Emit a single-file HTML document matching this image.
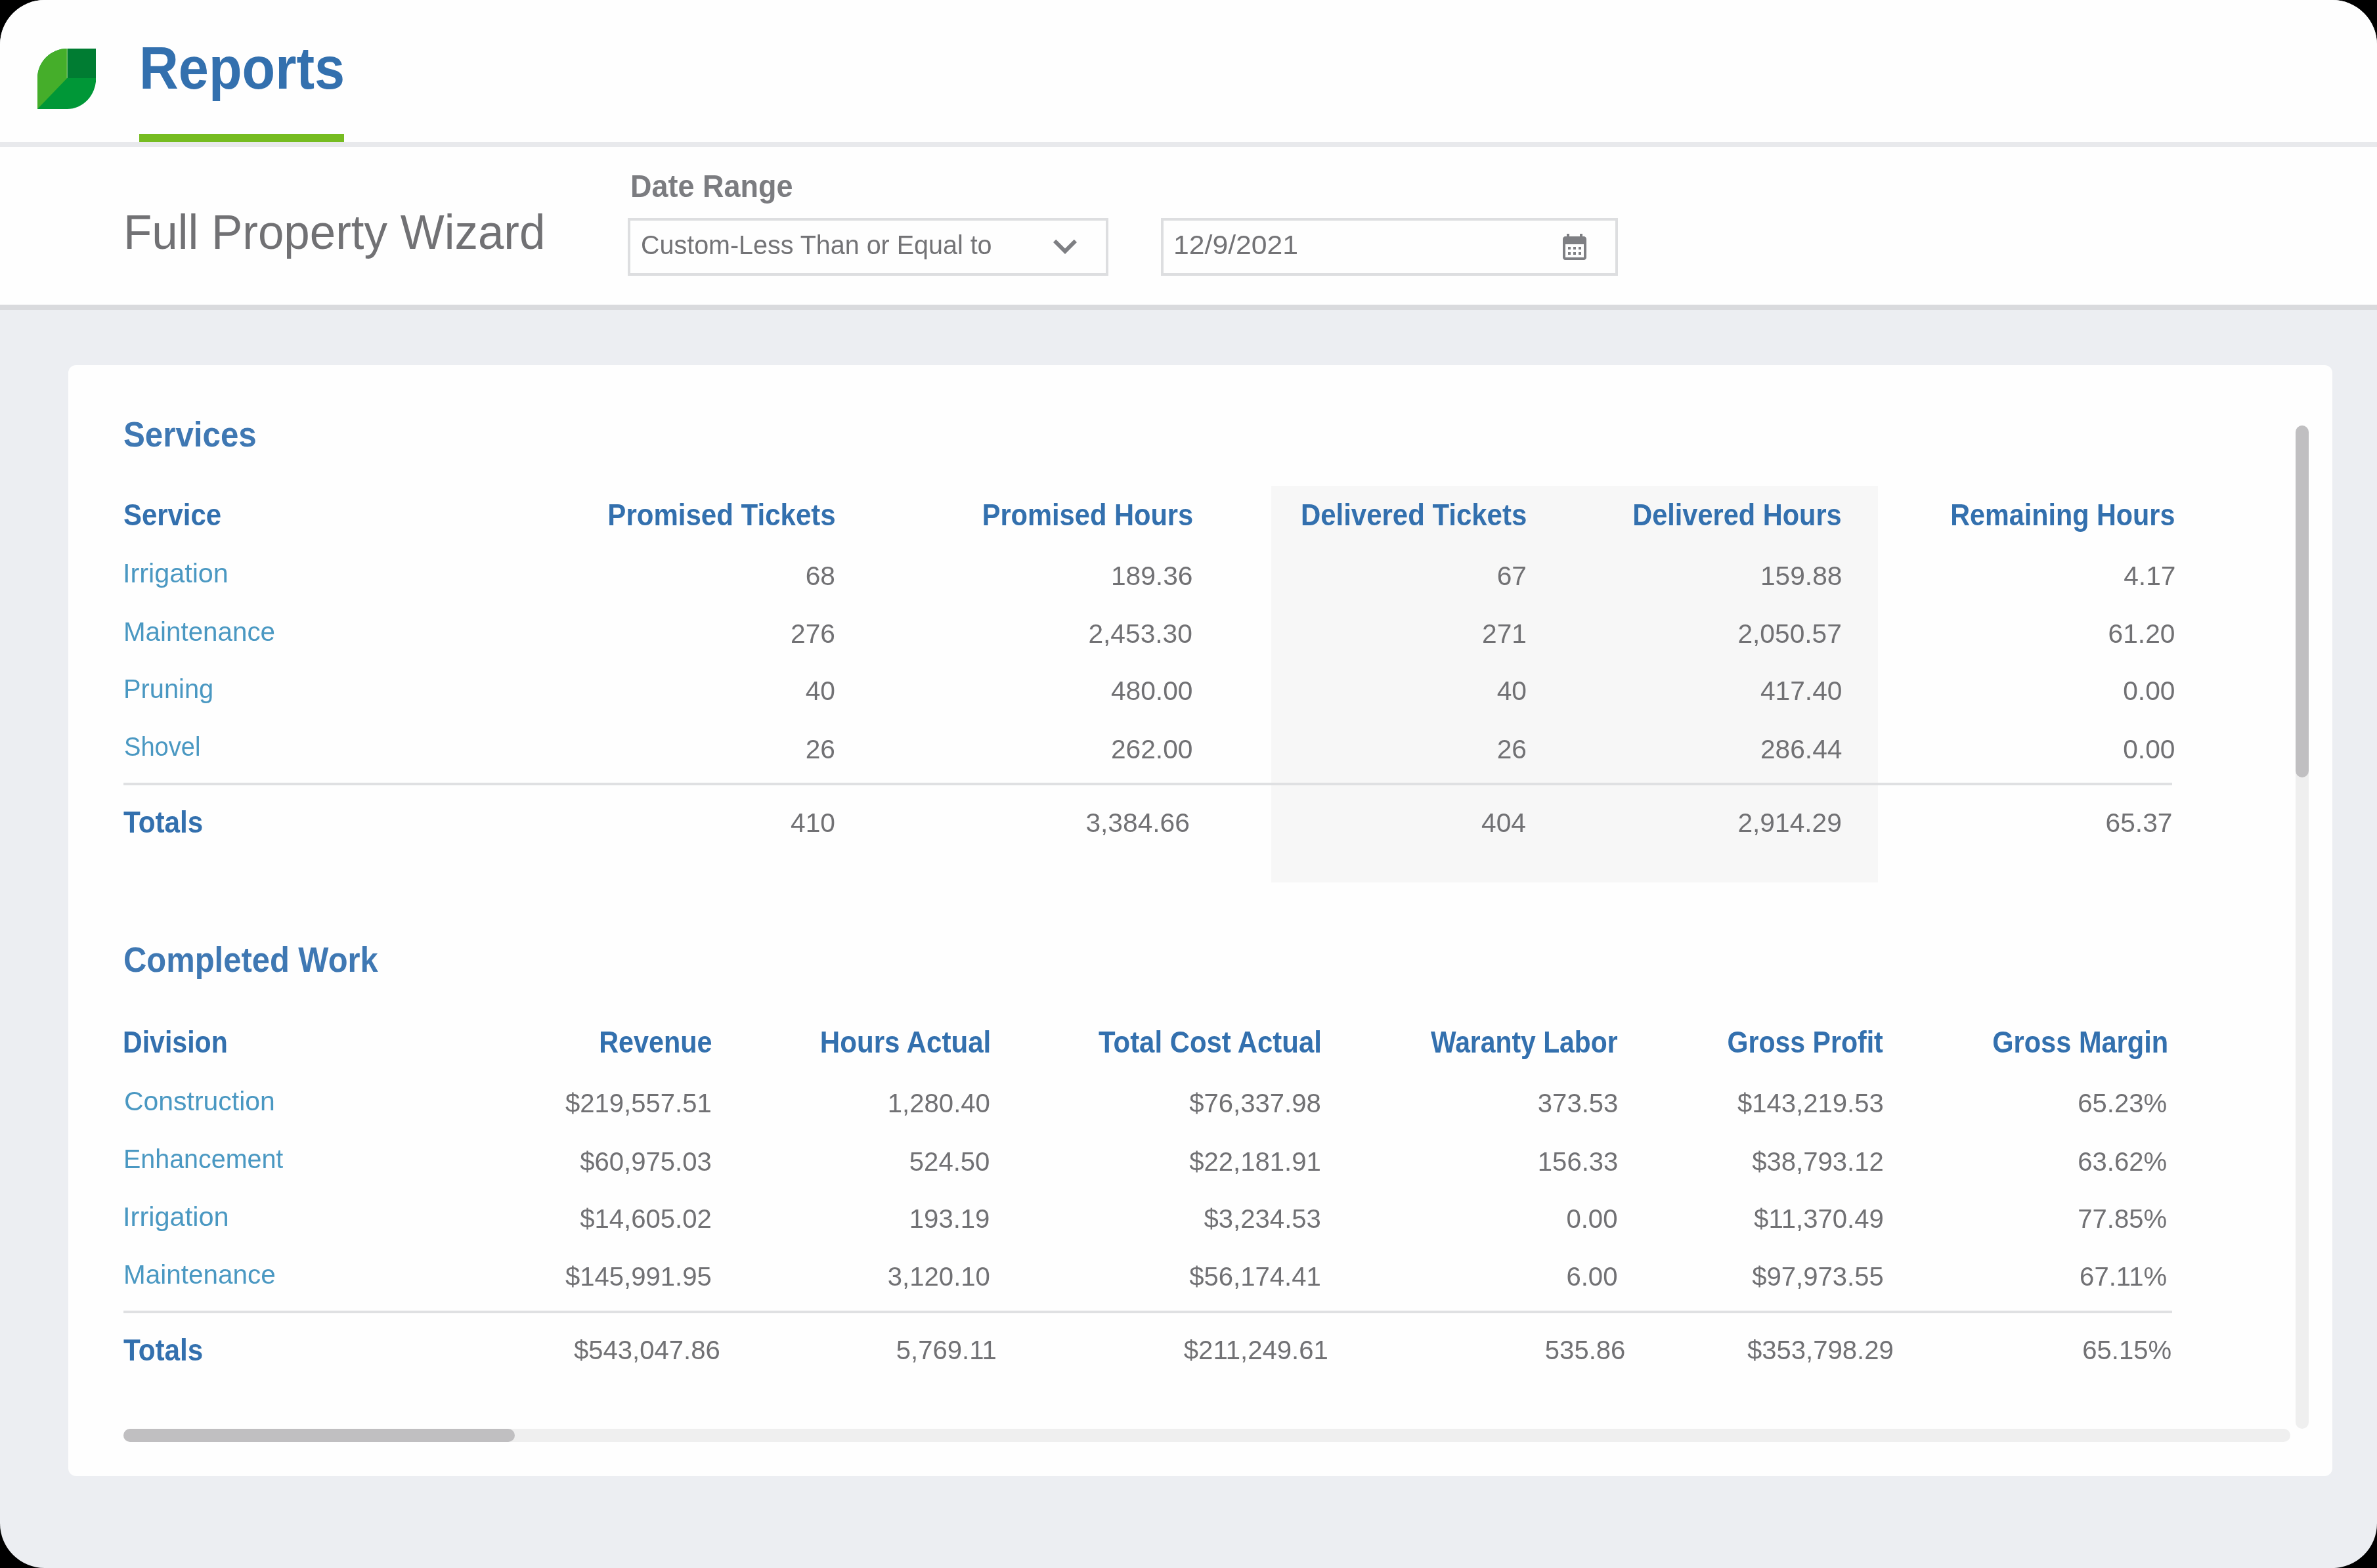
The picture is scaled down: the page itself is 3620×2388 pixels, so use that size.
<!DOCTYPE html>
<html><head><meta charset="utf-8"><title>Reports</title>
<style>
html,body{margin:0;padding:0;background:#000;}
body{width:3620px;height:2388px;overflow:hidden;position:relative;font-family:"Liberation Sans",sans-serif;}
.frame{position:absolute;left:0;top:0;width:3620px;height:2388px;border-radius:68px;overflow:hidden;background:#eceef2;}
.abs{position:absolute;}
.t{position:absolute;white-space:nowrap;line-height:1;font-family:"Liberation Sans",sans-serif;}
.tl{position:absolute;left:0;top:0;width:3620px;height:2388px;will-change:transform;}
</style></head>
<body>
<div class="frame">
  <!-- header -->
  <div class="abs" style="left:0;top:0;width:3620px;height:216px;background:#fefefe;"></div>
  <div class="abs" style="left:0;top:216px;width:3620px;height:8px;background:#e8e9ec;"></div>
  <div class="abs" style="left:0;top:224px;width:3620px;height:240px;background:#fefefe;"></div>
  <div class="abs" style="left:0;top:464px;width:3620px;height:8px;background:#d9dadd;"></div>
  <!-- logo -->
  <svg class="abs" style="left:57.2px;top:73.8px;" width="89.3" height="92" viewBox="0 0 89.3 92">
    <path d="M0 92 L0 44.9 A45.2 44.9 0 0 1 45.2 0 H89.3 V44.9 A44.1 47.1 0 0 1 45.2 92 Z" fill="#009737"/>
    <path d="M0 92 L0 44.9 A45.2 44.9 0 0 1 45.2 0 L45.2 44.9 Z" fill="#45ae2a"/>
    <path d="M45.2 0 H89.3 V44.9 H45.2 Z" fill="#007c32"/>
    <rect x="44.7" y="0" width="1" height="44.9" fill="#9fd58f"/>
  </svg>
  <div class="abs" style="left:212px;top:204px;width:312px;height:12px;background:#76bc21;"></div>
  <!-- select -->
  <div class="abs" style="left:956px;top:332px;width:724px;height:80px;border:4px solid #dddee0;background:#fefefe;"></div>
  <svg class="abs" style="left:1586px;top:339.4px;" width="72" height="72" viewBox="0 0 24 24"><path d="M16.59 8.59L12 13.17 7.41 8.59 6 10l6 6 6-6z" fill="#7e7f83"/></svg>
  <!-- date -->
  <div class="abs" style="left:1768px;top:332px;width:688px;height:80px;border:4px solid #dddee0;background:#fefefe;"></div>
  <svg class="abs" style="left:2374px;top:352px;" width="48" height="48" viewBox="0 0 24 24"><path d="M19 4h-1V2h-2v2H8V2H6v2H5c-1.11 0-1.99.9-1.99 2L3 20c0 1.1.89 2 2 2h14c1.1 0 2-.9 2-2V6c0-1.1-.9-2-2-2zm0 16H5V10h14v10zM9 14H7v-2h2v2zm4 0h-2v-2h2v2zm4 0h-2v-2h2v2zm-8 4H7v-2h2v2zm4 0h-2v-2h2v2zm4 0h-2v-2h2v2z" fill="#7e7f83"/></svg>
  <!-- card -->
  <div class="abs" style="left:104px;top:556px;width:3448px;height:1692px;border-radius:12px;background:#fefefe;"></div>
  <div class="abs" style="left:1936px;top:740px;width:924px;height:604px;background:#f7f7f7;"></div>
  <div class="abs" style="left:188px;top:1192px;width:3120px;height:4px;background:#dfe0e2;"></div>
  <div class="abs" style="left:188px;top:1996px;width:3120px;height:4px;background:#dfe0e2;"></div>
  <!-- scrollbars -->
  <div class="abs" style="left:188px;top:2176px;width:3300px;height:20px;border-radius:10px;background:#efefef;"></div>
  <div class="abs" style="left:188px;top:2176px;width:596px;height:20px;border-radius:10px;background:#c0bfc1;"></div>
  <div class="abs" style="left:3496px;top:648px;width:20px;height:1528px;border-radius:10px;background:#efefef;"></div>
  <div class="abs" style="left:3496px;top:648px;width:20px;height:536px;border-radius:10px;background:#c0bfc1;"></div>
<div class="tl">
<div class=t style="top:59.0px;font-size:90.94px;color:#3370ae;font-weight:700;left:211.8px;transform:scaleX(0.9114);transform-origin:0 0;">Reports</div>
<div class=t style="top:317.2px;font-size:74.41px;color:#717174;left:188.0px;transform:scaleX(0.9532);transform-origin:0 0;">Full Property Wizard</div>
<div class=t style="top:258.7px;font-size:48.57px;color:#7b7c80;font-weight:700;left:960.2px;transform:scaleX(0.9262);transform-origin:0 0;">Date Range</div>
<div class=t style="top:353.1px;font-size:41.34px;color:#737376;left:976.1px;transform:scaleX(0.9550);transform-origin:0 0;">Custom-Less Than or Equal to</div>
<div class=t style="top:353.1px;font-size:41.34px;color:#737376;left:1786.9px;transform:scaleX(1.0335);transform-origin:0 0;">12/9/2021</div>
<div class=t style="top:634.9px;font-size:53.74px;color:#3f78b3;font-weight:700;left:187.5px;transform:scaleX(0.9171);transform-origin:0 0;">Services</div>
<div class=t style="top:761.6px;font-size:45.47px;color:#3370ae;font-weight:700;left:187.6px;transform:scaleX(0.9215);transform-origin:0 0;">Service</div>
<div class=t style="top:761.6px;font-size:45.47px;color:#3370ae;font-weight:700;right:2347.4px;transform:scaleX(0.9245);transform-origin:100% 0;">Promised Tickets</div>
<div class=t style="top:761.6px;font-size:45.47px;color:#3370ae;font-weight:700;right:1803.2px;transform:scaleX(0.9156);transform-origin:100% 0;">Promised Hours</div>
<div class=t style="top:761.6px;font-size:45.47px;color:#3370ae;font-weight:700;right:1295.1px;transform:scaleX(0.9226);transform-origin:100% 0;">Delivered Tickets</div>
<div class=t style="top:761.6px;font-size:45.47px;color:#3370ae;font-weight:700;right:815.2px;transform:scaleX(0.9134);transform-origin:100% 0;">Delivered Hours</div>
<div class=t style="top:761.6px;font-size:45.47px;color:#3370ae;font-weight:700;right:308.0px;transform:scaleX(0.9091);transform-origin:100% 0;">Remaining Hours</div>
<div class=t style="top:853.1px;font-size:41.34px;color:#4a98c2;left:187.0px;">Irrigation</div>
<div class=t style="top:941.5px;font-size:41.34px;color:#4a98c2;left:188.1px;transform:scaleX(0.9763);transform-origin:0 0;">Maintenance</div>
<div class=t style="top:1029.1px;font-size:41.34px;color:#4a98c2;left:188.1px;transform:scaleX(0.9635);transform-origin:0 0;">Pruning</div>
<div class=t style="top:1117.1px;font-size:41.34px;color:#4a98c2;left:189.2px;transform:scaleX(0.9221);transform-origin:0 0;">Shovel</div>
<div class=t style="top:857.1px;font-size:41.34px;color:#717174;right:2348.0px;transform:scaleX(0.9850);transform-origin:100% 0;">68</div>
<div class=t style="top:857.1px;font-size:41.34px;color:#717174;right:1804.1px;transform:scaleX(0.9850);transform-origin:100% 0;">189.36</div>
<div class=t style="top:857.1px;font-size:41.34px;color:#717174;right:1295.0px;transform:scaleX(0.9850);transform-origin:100% 0;">67</div>
<div class=t style="top:857.1px;font-size:41.34px;color:#717174;right:815.1px;transform:scaleX(0.9850);transform-origin:100% 0;">159.88</div>
<div class=t style="top:857.1px;font-size:41.34px;color:#717174;right:306.6px;transform:scaleX(0.9850);transform-origin:100% 0;">4.17</div>
<div class=t style="top:944.6px;font-size:41.34px;color:#717174;right:2348.1px;transform:scaleX(0.9850);transform-origin:100% 0;">276</div>
<div class=t style="top:944.6px;font-size:41.34px;color:#717174;right:1803.7px;transform:scaleX(0.9850);transform-origin:100% 0;">2,453.30</div>
<div class=t style="top:944.6px;font-size:41.34px;color:#717174;right:1295.1px;transform:scaleX(0.9850);transform-origin:100% 0;">271</div>
<div class=t style="top:944.6px;font-size:41.34px;color:#717174;right:814.7px;transform:scaleX(0.9850);transform-origin:100% 0;">2,050.57</div>
<div class=t style="top:944.6px;font-size:41.34px;color:#717174;right:307.6px;transform:scaleX(0.9850);transform-origin:100% 0;">61.20</div>
<div class=t style="top:1032.1px;font-size:41.34px;color:#717174;right:2348.0px;transform:scaleX(0.9850);transform-origin:100% 0;">40</div>
<div class=t style="top:1032.1px;font-size:41.34px;color:#717174;right:1804.1px;transform:scaleX(0.9850);transform-origin:100% 0;">480.00</div>
<div class=t style="top:1032.1px;font-size:41.34px;color:#717174;right:1295.0px;transform:scaleX(0.9850);transform-origin:100% 0;">40</div>
<div class=t style="top:1032.1px;font-size:41.34px;color:#717174;right:815.1px;transform:scaleX(0.9850);transform-origin:100% 0;">417.40</div>
<div class=t style="top:1032.1px;font-size:41.34px;color:#717174;right:307.6px;transform:scaleX(0.9850);transform-origin:100% 0;">0.00</div>
<div class=t style="top:1120.6px;font-size:41.34px;color:#717174;right:2348.0px;transform:scaleX(0.9850);transform-origin:100% 0;">26</div>
<div class=t style="top:1120.6px;font-size:41.34px;color:#717174;right:1804.1px;transform:scaleX(0.9850);transform-origin:100% 0;">262.00</div>
<div class=t style="top:1120.6px;font-size:41.34px;color:#717174;right:1295.0px;transform:scaleX(0.9850);transform-origin:100% 0;">26</div>
<div class=t style="top:1120.6px;font-size:41.34px;color:#717174;right:815.1px;transform:scaleX(0.9850);transform-origin:100% 0;">286.44</div>
<div class=t style="top:1120.6px;font-size:41.34px;color:#717174;right:307.6px;transform:scaleX(0.9850);transform-origin:100% 0;">0.00</div>
<div class=t style="top:1229.6px;font-size:45.47px;color:#3370ae;font-weight:700;left:187.9px;transform:scaleX(0.9297);transform-origin:0 0;">Totals</div>
<div class=t style="top:1233.1px;font-size:41.34px;color:#717174;right:2348.1px;transform:scaleX(0.9850);transform-origin:100% 0;">410</div>
<div class=t style="top:1233.1px;font-size:41.34px;color:#717174;right:1808.2px;transform:scaleX(0.9850);transform-origin:100% 0;">3,384.66</div>
<div class=t style="top:1233.1px;font-size:41.34px;color:#717174;right:1296.0px;transform:scaleX(0.9850);transform-origin:100% 0;">404</div>
<div class=t style="top:1233.1px;font-size:41.34px;color:#717174;right:815.2px;transform:scaleX(0.9850);transform-origin:100% 0;">2,914.29</div>
<div class=t style="top:1233.1px;font-size:41.34px;color:#717174;right:311.6px;transform:scaleX(0.9850);transform-origin:100% 0;">65.37</div>
<div class=t style="top:1434.8px;font-size:53.74px;color:#3f78b3;font-weight:700;left:187.8px;transform:scaleX(0.9104);transform-origin:0 0;">Completed Work</div>
<div class=t style="top:1565.2px;font-size:45.47px;color:#3370ae;font-weight:700;left:186.9px;transform:scaleX(0.9035);transform-origin:0 0;">Division</div>
<div class=t style="top:1565.2px;font-size:45.47px;color:#3370ae;font-weight:700;right:2535.4px;transform:scaleX(0.9092);transform-origin:100% 0;">Revenue</div>
<div class=t style="top:1565.2px;font-size:45.47px;color:#3370ae;font-weight:700;right:2110.6px;transform:scaleX(0.9258);transform-origin:100% 0;">Hours Actual</div>
<div class=t style="top:1565.2px;font-size:45.47px;color:#3370ae;font-weight:700;right:1607.4px;transform:scaleX(0.9211);transform-origin:100% 0;">Total Cost Actual</div>
<div class=t style="top:1565.2px;font-size:45.47px;color:#3370ae;font-weight:700;right:1156.1px;transform:scaleX(0.8987);transform-origin:100% 0;">Waranty Labor</div>
<div class=t style="top:1565.2px;font-size:45.47px;color:#3370ae;font-weight:700;right:752.0px;transform:scaleX(0.9031);transform-origin:100% 0;">Gross Profit</div>
<div class=t style="top:1565.2px;font-size:45.47px;color:#3370ae;font-weight:700;right:318.2px;transform:scaleX(0.9139);transform-origin:100% 0;">Gross Margin</div>
<div class=t style="top:1656.6px;font-size:41.34px;color:#4a98c2;left:188.5px;transform:scaleX(0.9903);transform-origin:0 0;">Construction</div>
<div class=t style="top:1745.4px;font-size:41.34px;color:#4a98c2;left:187.6px;transform:scaleX(0.9540);transform-origin:0 0;">Enhancement</div>
<div class=t style="top:1832.9px;font-size:41.34px;color:#4a98c2;left:186.5px;transform:scaleX(1.0052);transform-origin:0 0;">Irrigation</div>
<div class=t style="top:1921.1px;font-size:41.34px;color:#4a98c2;left:187.6px;transform:scaleX(0.9789);transform-origin:0 0;">Maintenance</div>
<div class=t style="top:1660.1px;font-size:41.34px;color:#717174;right:2536.2px;transform:scaleX(0.9700);transform-origin:100% 0;">$219,557.51</div>
<div class=t style="top:1660.1px;font-size:41.34px;color:#717174;right:2111.8px;transform:scaleX(0.9700);transform-origin:100% 0;">1,280.40</div>
<div class=t style="top:1660.1px;font-size:41.34px;color:#717174;right:1608.2px;transform:scaleX(0.9700);transform-origin:100% 0;">$76,337.98</div>
<div class=t style="top:1660.1px;font-size:41.34px;color:#717174;right:1156.1px;transform:scaleX(0.9700);transform-origin:100% 0;">373.53</div>
<div class=t style="top:1660.1px;font-size:41.34px;color:#717174;right:750.9px;transform:scaleX(0.9700);transform-origin:100% 0;">$143,219.53</div>
<div class=t style="top:1660.1px;font-size:41.34px;color:#717174;right:319.9px;transform:scaleX(0.9700);transform-origin:100% 0;">65.23%</div>
<div class=t style="top:1748.6px;font-size:41.34px;color:#717174;right:2536.2px;transform:scaleX(0.9700);transform-origin:100% 0;">$60,975.03</div>
<div class=t style="top:1748.6px;font-size:41.34px;color:#717174;right:2112.2px;transform:scaleX(0.9700);transform-origin:100% 0;">524.50</div>
<div class=t style="top:1748.6px;font-size:41.34px;color:#717174;right:1608.2px;transform:scaleX(0.9700);transform-origin:100% 0;">$22,181.91</div>
<div class=t style="top:1748.6px;font-size:41.34px;color:#717174;right:1156.1px;transform:scaleX(0.9700);transform-origin:100% 0;">156.33</div>
<div class=t style="top:1748.6px;font-size:41.34px;color:#717174;right:750.9px;transform:scaleX(0.9700);transform-origin:100% 0;">$38,793.12</div>
<div class=t style="top:1748.6px;font-size:41.34px;color:#717174;right:319.9px;transform:scaleX(0.9700);transform-origin:100% 0;">63.62%</div>
<div class=t style="top:1836.1px;font-size:41.34px;color:#717174;right:2536.2px;transform:scaleX(0.9700);transform-origin:100% 0;">$14,605.02</div>
<div class=t style="top:1836.1px;font-size:41.34px;color:#717174;right:2112.2px;transform:scaleX(0.9700);transform-origin:100% 0;">193.19</div>
<div class=t style="top:1836.1px;font-size:41.34px;color:#717174;right:1608.2px;transform:scaleX(0.9700);transform-origin:100% 0;">$3,234.53</div>
<div class=t style="top:1836.1px;font-size:41.34px;color:#717174;right:1156.1px;transform:scaleX(0.9700);transform-origin:100% 0;">0.00</div>
<div class=t style="top:1836.1px;font-size:41.34px;color:#717174;right:751.0px;transform:scaleX(0.9700);transform-origin:100% 0;">$11,370.49</div>
<div class=t style="top:1836.1px;font-size:41.34px;color:#717174;right:319.9px;transform:scaleX(0.9700);transform-origin:100% 0;">77.85%</div>
<div class=t style="top:1923.6px;font-size:41.34px;color:#717174;right:2536.2px;transform:scaleX(0.9700);transform-origin:100% 0;">$145,991.95</div>
<div class=t style="top:1923.6px;font-size:41.34px;color:#717174;right:2111.8px;transform:scaleX(0.9700);transform-origin:100% 0;">3,120.10</div>
<div class=t style="top:1923.6px;font-size:41.34px;color:#717174;right:1608.2px;transform:scaleX(0.9700);transform-origin:100% 0;">$56,174.41</div>
<div class=t style="top:1923.6px;font-size:41.34px;color:#717174;right:1156.1px;transform:scaleX(0.9700);transform-origin:100% 0;">6.00</div>
<div class=t style="top:1923.6px;font-size:41.34px;color:#717174;right:750.9px;transform:scaleX(0.9700);transform-origin:100% 0;">$97,973.55</div>
<div class=t style="top:1923.6px;font-size:41.34px;color:#717174;right:319.9px;transform:scaleX(0.9700);transform-origin:100% 0;">67.11%</div>
<div class=t style="top:2034.2px;font-size:45.47px;color:#3370ae;font-weight:700;left:188.1px;transform:scaleX(0.9297);transform-origin:0 0;">Totals</div>
<div class=t style="top:2036.1px;font-size:41.34px;color:#717174;right:2523.6px;transform:scaleX(0.9700);transform-origin:100% 0;">$543,047.86</div>
<div class=t style="top:2036.1px;font-size:41.34px;color:#717174;right:2102.2px;transform:scaleX(0.9700);transform-origin:100% 0;">5,769.11</div>
<div class=t style="top:2036.1px;font-size:41.34px;color:#717174;right:1597.3px;transform:scaleX(0.9700);transform-origin:100% 0;">$211,249.61</div>
<div class=t style="top:2036.1px;font-size:41.34px;color:#717174;right:1144.6px;transform:scaleX(0.9700);transform-origin:100% 0;">535.86</div>
<div class=t style="top:2036.1px;font-size:41.34px;color:#717174;right:736.5px;transform:scaleX(0.9700);transform-origin:100% 0;">$353,798.29</div>
<div class=t style="top:2036.1px;font-size:41.34px;color:#717174;right:312.4px;transform:scaleX(0.9700);transform-origin:100% 0;">65.15%</div>
</div>
</div>
</body></html>
